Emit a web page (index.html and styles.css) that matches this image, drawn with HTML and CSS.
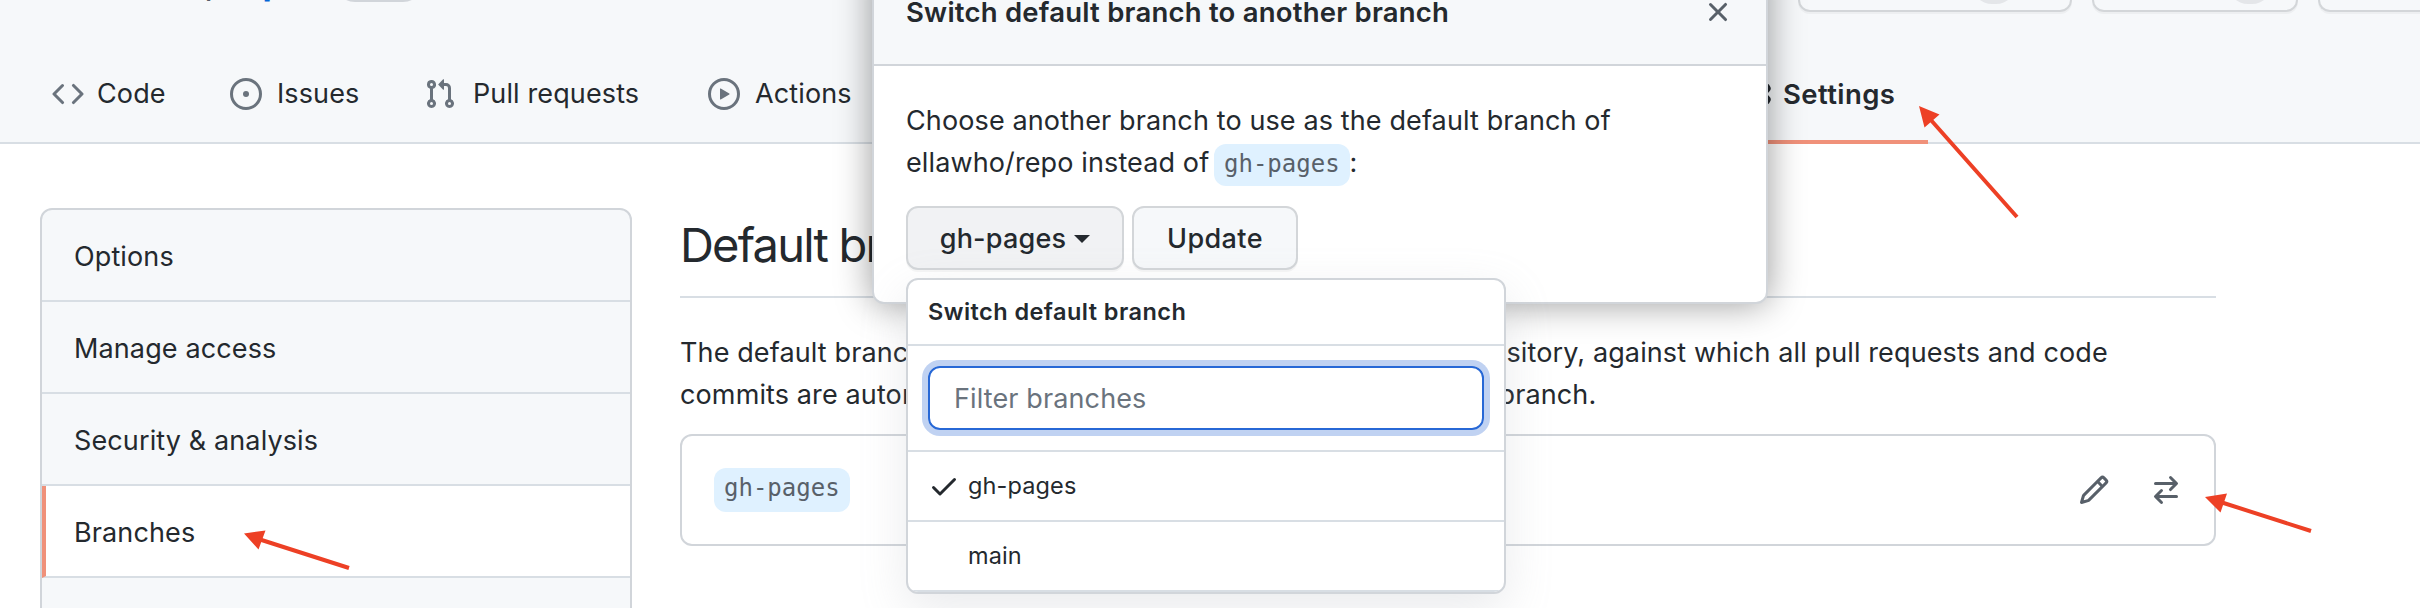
FILE: index.html
```html
<!DOCTYPE html>
<html lang="en">
<head>
<meta charset="utf-8">
<title>Branches settings</title>
<link rel="stylesheet" href="styles.css">
</head>
<body>
<div class="page">
  <header class="header">
    <div class="repo-row">
      <div class="repo-path"><span class="slash">/</span><span class="repo-name">repo</span><span class="label"></span></div>
      <div class="repo-actions">
        <div class="action action-watch"><span class="count"></span></div>
        <div class="action action-star"><span class="count"></span></div>
        <div class="action action-fork"></div>
      </div>
    </div>
    <nav class="tabs">
      <a class="tab tab-code"><svg class="icon" viewBox="0 0 16 16"><path d="M4.72 3.22a.75.75 0 011.06 1.06L2.06 8l3.72 3.72a.75.75 0 11-1.06 1.06L.47 8.53a.75.75 0 010-1.06l4.25-4.25zm6.56 0a.75.75 0 10-1.06 1.06L13.94 8l-3.72 3.72a.75.75 0 101.06 1.06l4.25-4.25a.75.75 0 000-1.06l-4.25-4.25z"/></svg><span>Code</span></a>
      <a class="tab tab-issues"><svg class="icon" viewBox="0 0 16 16"><path fill-rule="evenodd" d="M8 1.5a6.5 6.5 0 100 13 6.5 6.5 0 000-13zM0 8a8 8 0 1116 0A8 8 0 010 8z"/><circle cx="8" cy="8" r="1.5"/></svg><span>Issues</span></a>
      <a class="tab tab-pulls"><svg class="icon" viewBox="0 0 16 16"><path fill-rule="evenodd" d="M7.177 3.073L9.573.677A.25.25 0 0110 .854v4.792a.25.25 0 01-.427.177L7.177 3.427a.25.25 0 010-.354zM3.75 2.5a.75.75 0 100 1.5.75.75 0 000-1.5zm-2.25.75a2.25 2.25 0 113 2.122v5.256a2.251 2.251 0 11-1.5 0V5.372A2.25 2.25 0 011.5 3.25zM11 2.5h-1V4h1a1 1 0 011 1v5.628a2.251 2.251 0 101.5 0V5A2.5 2.5 0 0011 2.5zm1 10.25a.75.75 0 111.5 0 .75.75 0 01-1.5 0zM3.75 12a.75.75 0 100 1.5.75.75 0 000-1.5z"/></svg><span>Pull requests</span></a>
      <a class="tab tab-actions"><svg class="icon" viewBox="0 0 16 16"><path fill-rule="evenodd" d="M1.5 8a6.5 6.5 0 1113 0 6.5 6.5 0 01-13 0zM8 0a8 8 0 100 16A8 8 0 008 0zM6.379 5.227A.25.25 0 006 5.442v5.117a.25.25 0 00.379.214l4.264-2.559a.25.25 0 000-.428L6.379 5.227z"/></svg><span>Actions</span></a>
      <a class="tab tab-settings"><svg class="icon" viewBox="0 0 16 16"><path fill-rule="evenodd" d="M7.429 1.525a6.593 6.593 0 011.142 0c.036.003.108.036.137.146l.289 1.105c.147.56.55.967.997 1.189.174.086.341.183.501.29.417.278.97.423 1.53.27l1.102-.303c.11-.03.175.016.195.046.219.31.41.641.573.989.014.031.022.11-.059.19l-.815.806c-.411.406-.562.957-.53 1.456a4.588 4.588 0 010 .582c-.032.499.119 1.05.53 1.456l.815.806c.08.08.073.159.059.19a6.494 6.494 0 01-.573.99c-.02.029-.086.074-.195.045l-1.103-.303c-.559-.153-1.112-.008-1.529.27-.16.107-.327.204-.5.29-.449.222-.851.628-.998 1.189l-.289 1.105c-.029.11-.101.143-.137.146a6.613 6.613 0 01-1.142 0c-.036-.003-.108-.037-.137-.146l-.289-1.105c-.147-.56-.55-.967-.997-1.189a4.502 4.502 0 01-.501-.29c-.417-.278-.97-.423-1.53-.27l-1.102.303c-.11.03-.175-.016-.195-.046a6.492 6.492 0 01-.573-.989c-.014-.031-.022-.11.059-.19l.815-.806c.411-.406.562-.957.53-1.456a4.587 4.587 0 010-.582c.032-.499-.119-1.05-.53-1.456l-.815-.806c-.08-.08-.073-.159-.059-.19a6.44 6.44 0 01.573-.99c.02-.029.086-.075.195-.045l1.103.303c.559.153 1.112.008 1.529-.27.16-.107.327-.204.5-.29.449-.222.851-.628.998-1.189l.289-1.105c.029-.11.101-.143.137-.146zM8 0c-.236 0-.47.01-.701.03-.743.065-1.29.615-1.458 1.261l-.29 1.106c-.017.066-.078.158-.211.224a5.994 5.994 0 00-.668.386c-.123.082-.233.09-.3.071L3.27 2.776c-.644-.177-1.392.02-1.82.63a7.977 7.977 0 00-.704 1.217c-.315.675-.111 1.422.363 1.891l.815.806c.05.048.098.147.088.294a6.084 6.084 0 000 .772c.01.147-.038.246-.088.294l-.815.806c-.474.469-.678 1.216-.363 1.891.2.428.436.835.704 1.218.428.609 1.176.806 1.82.63l1.103-.303c.066-.019.176-.011.299.071.213.143.436.272.668.386.133.066.194.158.212.224l.289 1.106c.169.646.715 1.196 1.458 1.26a8.094 8.094 0 001.402 0c.743-.064 1.29-.614 1.458-1.26l.29-1.106c.017-.066.078-.158.211-.224a5.98 5.98 0 00.668-.386c.123-.082.233-.09.3-.071l1.102.302c.644.177 1.392-.02 1.82-.63.268-.382.505-.789.704-1.217.315-.675.111-1.422-.364-1.891l-.814-.806c-.05-.048-.098-.147-.088-.294a6.1 6.1 0 000-.772c-.01-.147.039-.246.088-.294l.814-.806c.475-.469.679-1.216.364-1.891a7.992 7.992 0 00-.704-1.218c-.428-.609-1.176-.806-1.82-.63l-1.103.303c-.066.019-.176.011-.299-.071a5.991 5.991 0 00-.668-.386c-.133-.066-.194-.158-.212-.224L10.16 1.29C9.99.645 9.444.095 8.701.031A8.094 8.094 0 008 0zm1.5 8a1.5 1.5 0 11-3 0 1.5 1.5 0 013 0zM11 8a3 3 0 11-6 0 3 3 0 016 0z"/></svg><span>Settings</span></a>
    </nav>
  </header>

  <main class="layout">
    <aside class="menu">
      <a class="menu-item">Options</a>
      <a class="menu-item">Manage access</a>
      <a class="menu-item">Security &amp; analysis</a>
      <a class="menu-item menu-item-selected">Branches</a>
      <a class="menu-item"></a>
    </aside>
    <section class="content">
      <h2 class="heading">Default branch</h2>
      <p class="intro"><span class="intro-line">The default branch is considered the “base” branch in your repository, against which all pull requests and code</span><span class="intro-line">commits are automatically made, unless you specify a different branch.</span></p>
      <div class="branch-box">
        <span class="branch-name">gh-pages</span>
        <div class="branch-tools">
          <svg class="icon" viewBox="0 0 16 16"><path fill-rule="evenodd" d="M11.013 1.427a1.75 1.75 0 012.474 0l1.086 1.086a1.75 1.75 0 010 2.474l-8.61 8.61c-.21.21-.47.364-.756.445l-3.251.93a.75.75 0 01-.927-.928l.929-3.25a1.75 1.75 0 01.445-.758l8.61-8.61zm1.414 1.06a.25.25 0 00-.354 0L10.811 3.75l1.439 1.44 1.263-1.263a.25.25 0 000-.354l-1.086-1.086zM11.189 6.25L9.75 4.81l-6.286 6.287a.25.25 0 00-.064.108l-.558 1.953 1.953-.558a.249.249 0 00.108-.064l6.286-6.286z"/></svg>
          <svg class="icon" viewBox="0 0 16 16"><path fill-rule="evenodd" d="M5.22 14.78a.75.75 0 001.06-1.06L4.56 12h8.69a.75.75 0 000-1.5H4.56l1.72-1.72a.75.75 0 00-1.06-1.06l-3 3a.75.75 0 000 1.06l3 3zm5.56-6.5a.75.75 0 11-1.06-1.06l1.72-1.72H2.75a.75.75 0 010-1.5h8.69L9.72 2.28a.75.75 0 011.06-1.06l3 3a.75.75 0 010 1.06l-3 3z"/></svg>
        </div>
      </div>
    </section>
  </main>

  <div class="dialog">
    <div class="dialog-header">
      <h3 class="dialog-title">Switch default branch to another branch</h3>
      <svg class="icon close" viewBox="0 0 16 16"><path fill-rule="evenodd" d="M3.72 3.72a.75.75 0 011.06 0L8 6.94l3.22-3.22a.75.75 0 111.06 1.06L9.06 8l3.22 3.22a.75.75 0 11-1.06 1.06L8 9.06l-3.22 3.22a.75.75 0 01-1.06-1.06L6.94 8 3.72 4.78a.75.75 0 010-1.06z"/></svg>
    </div>
    <div class="dialog-body">
      <p class="dialog-text">Choose another branch to use as the default branch of<br>ellawho/repo instead of <span class="branch-name">gh-pages</span>:</p>
      <div class="buttons">
        <div class="select">
          <button class="btn btn-select" type="button"><span>gh-pages</span><span class="caret"></span></button>
          <div class="dropdown">
            <div class="dropdown-title">Switch default branch</div>
            <div class="dropdown-filter"><div class="filter-input">Filter branches</div></div>
            <div class="dropdown-row"><svg class="icon check" viewBox="0 0 16 16"><path fill-rule="evenodd" d="M13.78 4.22a.75.75 0 010 1.06l-7.25 7.25a.75.75 0 01-1.06 0L2.22 9.28a.75.75 0 011.06-1.06L6 10.94l6.72-6.72a.75.75 0 011.06 0z"/></svg><span>gh-pages</span></div>
            <div class="dropdown-row"><span class="check"></span><span>main</span></div>
          </div>
        </div>
        <button class="btn btn-update" type="button">Update</button>
      </div>
    </div>
  </div>

  <svg class="arrows" viewBox="0 0 2420 608">
    <path class="shaft" d="M1930 119L2017 217M2222 502.500L2311 531M260 539.500L349 568"/>
    <path class="tip" d="M1919 106L1939.500 114.500L1924.500 127.500ZM2205 497L2227 493.500L2220.500 512.500ZM244 533.500L265.500 530.500L258.500 549.500Z"/>
  </svg>
</div>
</body>
</html>
```

FILE: styles.css
```css
* {
  box-sizing: border-box;
}

body {
  margin: 0;
  background: #fff;
  color: #24292e;
  font: 27px/42px Inter, "Liberation Sans", sans-serif;
  letter-spacing: .12px;
}

h2, h3, p {
  margin: 0;
  font-weight: 400;
}

.page {
  position: relative;
  width: 2420px;
  height: 608px;
  overflow: hidden;
}

.icon {
  display: block;
  flex: none;
  width: 32px;
  height: 32px;
  fill: #6a737d;
}

/* Header */

.header {
  display: flex;
  flex-direction: column;
  height: 144px;
  background: #f6f8fa;
  border-bottom: 2px solid #d8dee4;
}

.repo-row {
  display: flex;
  flex: none;
  align-items: flex-end;
  justify-content: space-between;
  height: 12px;
}

.repo-path {
  display: flex;
  align-items: flex-end;
  height: 60px;
  padding-left: 206px;
  font-size: 39px;
  line-height: 60px;
  margin-bottom: 2px;
}

.slash {
  color: #586069;
  width: 18px;
  margin-bottom: -3px;
}

.repo-name {
  color: #0366d6;
  font-weight: 600;
  width: 97px;
}

.label {
  width: 88px;
  height: 40px;
  margin-left: 14px;
  margin-bottom: 8px;
  border: 2px solid #d1d5da;
  border-radius: 20px;
}

.repo-actions {
  display: flex;
  gap: 20px;
}

.action {
  display: flex;
  justify-content: flex-end;
  height: 56px;
  padding: 6px 54px 6px 0;
  border: 2px solid #d3d6d9;
  border-radius: 12px;
  box-shadow: 0 2px 0 rgba(27, 31, 35, .04);
}

.action-watch {
  width: 274px;
}

.action-star {
  width: 206px;
  padding-right: 24px;
}

.action-fork {
  width: 102px;
  border-right: 0;
  border-radius: 12px 0 0 12px;
}

.count {
  width: 44px;
  height: 40px;
  border-radius: 20px;
  background: #e4e6e9;
}

.tabs {
  display: flex;
  flex: none;
  height: 132px;
}

.tab {
  display: flex;
  gap: 15px;
  align-items: center;
  height: 132px;
  padding-top: 32px;
}

.tab-code {
  width: 178px;
  margin-left: 52px;
  gap: 13px;
}

.tab-issues {
  width: 194px;
}

.tab-pulls {
  gap: 17px;
  width: 284px;
}

.tab-actions {
  width: 142px;
}

.tab-settings {
  flex: none;
  width: 224px;
  margin-left: 854px;
  padding-top: 36px;
  padding-left: 36px;
  gap: 11px;
  border-bottom: 4px solid #f0917a;
  font-size: 27.5px;
  font-weight: 600;
  letter-spacing: .4px;
}

.tab-settings .icon {
  fill: #24292e;
}

/* Page body */

.layout {
  display: flex;
  gap: 48px;
  padding: 64px 40px 0;
}

.menu {
  flex: none;
  width: 592px;
  height: 480px;
  border: 2px solid #d1d5da;
  border-radius: 12px;
  background: #f6f8fa;
  overflow: hidden;
}

.menu-item {
  display: block;
  height: 92px;
  padding: 26px 32px 22px;
  border-bottom: 2px solid #d8dee4;
}

.menu-item-selected {
  background: #fff;
  border-left: 4px solid #f0917a;
  padding-left: 28px;
}

.content {
  flex: none;
  width: 1536px;
}

.heading {
  height: 90px;
  border-bottom: 2px solid #d8dee4;
  font-size: 47px;
  line-height: 73px;
  letter-spacing: -1.8px;
}

.intro {
  margin-top: 34px;
}

.intro-line {
  display: block;
  white-space: nowrap;
}

.branch-box {
  display: flex;
  align-items: center;
  justify-content: space-between;
  height: 112px;
  margin-top: 18px;
  padding: 0 32px;
  border: 2px solid #d1d5da;
  border-radius: 12px;
}

.branch-name {
  display: inline-block;
  height: 42px;
  padding: 0 10px;
  border-radius: 12px;
  background: #dff1ff;
  color: #586069;
  font: 24px/40px "DejaVu Sans Mono", monospace;
  letter-spacing: 0;
}

.branch-box .branch-name {
  height: 44px;
}

.branch-tools {
  display: flex;
  gap: 40px;
}

.branch-tools .icon,
.close {
  fill: #586069;
}

/* Dialog */

.dialog {
  position: absolute;
  left: 872px;
  top: -42px;
  width: 896px;
  height: 346px;
  border: 2px solid #d1d5da;
  border-radius: 12px;
  background: #fff;
  box-shadow: 0 0 36px rgba(0, 0, 0, .4);
}

.dialog-header {
  display: flex;
  align-items: center;
  justify-content: space-between;
  height: 106px;
  padding: 0 32px;
  background: #f6f8fa;
  border-bottom: 2px solid #d1d5da;
  border-radius: 10px 10px 0 0;
}

.dialog-title {
  font-size: 27.5px;
  font-weight: 600;
  letter-spacing: .22px;
}

.dialog-body {
  padding: 34px 32px 0;
}

.dialog-text {
  height: 84px;
  white-space: nowrap;
}

.dialog-text .branch-name {
  margin-top: 2px;
  margin-left: -3px;
  vertical-align: top;
}

.buttons {
  display: flex;
  gap: 8px;
  margin-top: 22px;
}

.select {
  position: relative;
}

.btn {
  display: flex;
  align-items: center;
  justify-content: center;
  height: 64px;
  padding: 1px 0 0;
  border: 2px solid #d3d6d9;
  border-radius: 12px;
  background: #f6f8fa;
  box-shadow: 0 2px 0 rgba(27, 31, 35, .04);
  color: #24292e;
  font: 500 27px/40px Inter, "Liberation Sans", sans-serif;
  letter-spacing: .2px;
}

.btn-select {
  gap: 8px;
  width: 218px;
  background: #f1f2f4;
}

.btn-update {
  width: 166px;
  letter-spacing: .4px;
}

.caret {
  border: 8px solid transparent;
  border-top-color: #24292e;
  border-bottom: 0;
}

.dropdown {
  position: absolute;
  left: 0;
  top: 72px;
  width: 600px;
  height: 316px;
  border: 2px solid #d1d5da;
  border-radius: 12px;
  background: #fff;
  box-shadow: 0 16px 48px rgba(149, 157, 165, .2);
  font-size: 23.5px;
  overflow: hidden;
}

.dropdown-title {
  height: 66px;
  padding: 11px 20px;
  border-bottom: 2px solid #d8dee4;
  font-weight: 600;
  letter-spacing: .45px;
}

.dropdown-filter {
  height: 106px;
  padding: 20px;
  border-bottom: 2px solid #d8dee4;
}

.filter-input {
  height: 64px;
  padding: 10px 24px 8px;
  border: 2px solid #2768d6;
  border-radius: 12px;
  box-shadow: 0 0 0 6px #c0d2f2;
  color: #6a737d;
  font-size: 27px;
}

.dropdown-row {
  display: flex;
  align-items: center;
  gap: 8px;
  height: 70px;
  padding-left: 20px;
  border-bottom: 2px solid #d8dee4;
}

.check {
  width: 32px;
  fill: #24292e;
}

/* Pointer arrows */

.arrows {
  position: absolute;
  inset: 0;
  width: 2420px;
  height: 608px;
  pointer-events: none;
}

.shaft {
  fill: none;
  stroke: #ed4025;
  stroke-width: 4;
}

.tip {
  fill: #ed4025;
}
```
